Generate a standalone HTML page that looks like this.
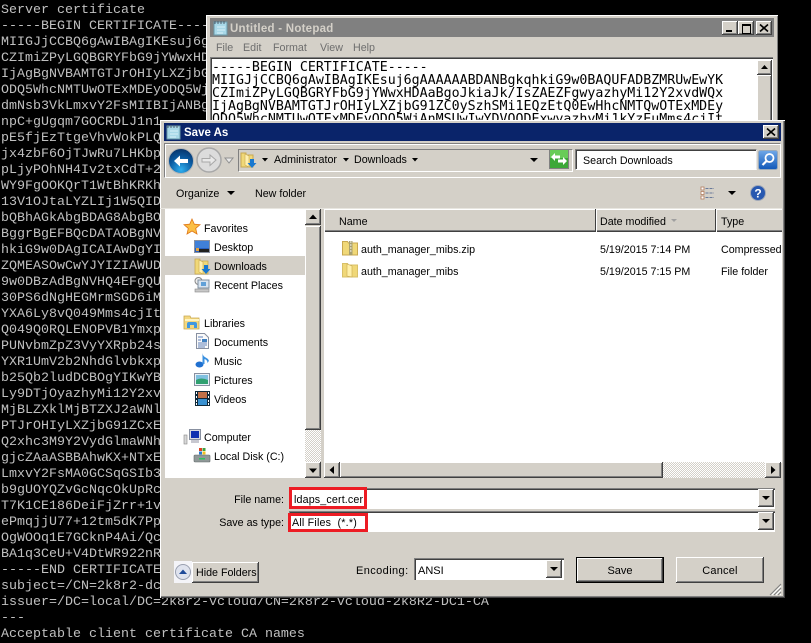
<!DOCTYPE html>
<html><head><meta charset="utf-8"><style>
html,body{margin:0;padding:0;background:#000;}
#r{position:relative;width:811px;height:643px;overflow:hidden;background:#000;font-family:"Liberation Sans",sans-serif;font-size:10.7px;color:#000;}
#con{position:absolute;left:1px;top:3px;font:13.33px/16px "Liberation Mono",monospace;color:#c0c0c0;white-space:pre;}
.a{position:absolute;}
.t{position:absolute;white-space:pre;line-height:14px;margin-top:1px;}
.u{margin-top:2px;}
.b{position:absolute;background:#d4d0c8;box-shadow:inset -1px -1px #404040,inset 1px 1px #fff,inset -2px -2px #808080,inset 2px 2px #d4d0c8;}
.s{position:absolute;background:#fff;box-shadow:inset 1px 1px #808080,inset 2px 2px #404040,inset -1px -1px #fff;}
.d{position:absolute;background:repeating-conic-gradient(#fff 0 25%,#d4d0c8 0 50%) 0 0/2px 2px;}
svg{position:absolute;overflow:visible;}
</style></head><body><div id="r">
<div id="con">Server certificate
-----BEGIN CERTIFICATE-----
MIIGJjCCBQ6gAwIBAgIKEsuj6g
CZImiZPyLGQBGRYFbG9jYWwxHDAa
IjAgBgNVBAMTGTJrOHIyLXZjbG91
ODQ5WhcNMTUwOTExMDEyODQ5Wj
dmNsb3VkLmxvY2FsMIIBIjANBg
npC+gUgqm7GOCRDLJ1n1
pE5fjEzTtgeVhvWokPLQ
jx4zbF6OjTJwRu7LHKbp
pLjyPOhNH4Iv2txCdT+2
WY9FgOOKQrT1WtBhKRKh
13V1OJtaLYZLIj1W5QID
bQBhAGkAbgBDAG8AbgBO
BggrBgEFBQcDATAOBgNV
hkiG9w0DAgICAIAwDgYI
ZQMEASOwCwYJYIZIAWUD
9w0DBzAdBgNVHQ4EFgQU
30PS6dNgHEGMrmSGD6iM
YXA6Ly8vQ049Mms4cjIt
Q049Q0RQLENOPVB1Ymxp
PUNvbmZpZ3VyYXRpb24s
YXR1UmV2b2NhdGlvbkxp
b25Qb2ludDCBOgYIKwYB
Ly9DTjOyazhyMi12Y2xv
MjBLZXklMjBTZXJ2aWNl
PTJrOHIyLXZjbG91ZCxE
Q2xhc3M9Y2VydGlmaWNh
gjcZAaASBBAhwKX+NTxE
LmxvY2FsMA0GCSqGSIb3
b9gUOYQZvGcNqcOkUpRc
T7K1CE186DeiFjZrr+1v
ePmqjjU77+12tm5dK7Pp
OgWOOq1E7GCknP4Ai/Qc
BA1q3CeU+V4DtWR922nR
-----END CERTIFICATE-----
subject=/CN=2k8r2-dc1.2k8r2-vcloud.local
issuer=/DC=local/DC=2k8r2-vcloud/CN=2k8r2-vcloud-2k8R2-DC1-CA
---
Acceptable client certificate CA names</div>

<!-- Notepad -->
<div class="a" style="left:206px;top:15px;width:572px;height:110px;background:#d4d0c8;box-shadow:inset 1px 1px #fff,inset -1px -1px #808080;"></div>
<div class="a" style="left:210px;top:18px;width:564px;height:19px;background:#808080;"></div>
<svg style="left:213px;top:20px" width="16" height="16"><rect x="1" y="2" width="13" height="13" fill="#a8d8e8" stroke="#6a98a8"/><path d="M2 1v3M5 1v3M8 1v3M11 1v3" stroke="#506070"/><path d="M4 7h8M4 10h8M4 13h6" stroke="#d8f0f8"/></svg>
<div class="t u" style="left:230px;top:20px;font-weight:bold;font-size:11.5px;color:#d4d0c8;letter-spacing:.25px">Untitled - Notepad</div>
<div class="b" style="left:722px;top:21px;width:16px;height:14px"></div>
<div class="a" style="left:726px;top:30px;width:6px;height:2px;background:#000"></div>
<div class="b" style="left:738px;top:21px;width:16px;height:14px"></div>
<div class="a" style="left:742px;top:24px;width:7px;height:7px;border:1px solid #000;border-top-width:2px;box-sizing:content-box"></div>
<div class="b" style="left:756px;top:21px;width:16px;height:14px"></div>
<svg style="left:756px;top:21px" width="16" height="14"><path d="M4 3.5l8 7M12 3.5l-8 7" stroke="#000" stroke-width="1.6"/></svg>
<div class="t" style="left:216px;top:40px;color:#6e6e6e">File</div>
<div class="t" style="left:243px;top:40px;color:#6e6e6e">Edit</div>
<div class="t" style="left:273px;top:40px;color:#6e6e6e">Format</div>
<div class="t" style="left:320px;top:40px;color:#6e6e6e">View</div>
<div class="t" style="left:353px;top:40px;color:#6e6e6e">Help</div>
<div class="s" style="left:210px;top:57px;width:563px;height:70px"></div>
<div class="a" style="left:212px;top:61px;font:13.28px/13px 'DejaVu Sans Mono',monospace;white-space:pre;color:#000;height:60px;overflow:hidden">-----BEGIN CERTIFICATE-----
MIIGJjCCBQ6gAwIBAgIKEsuj6gAAAAAABDANBgkqhkiG9w0BAQUFADBZMRUwEwYK
CZImiZPyLGQBGRYFbG9jYWwxHDAaBgoJkiaJk/IsZAEZFgwyazhyMi12Y2xvdWQx
IjAgBgNVBAMTGTJrOHIyLXZjbG91ZC0ySzhSMi1EQzEtQ0EwHhcNMTQwOTExMDEy
ODQ5WhcNMTUwOTExMDEyODQ5WjAnMSUwIwYDVQQDExwyazhyMi1kYzEuMms4cjIt</div>
<div class="b" style="left:757px;top:60px;width:15px;height:15px"></div>
<svg style="left:757px;top:60px" width="15" height="15"><path d="M7.5 5l3.5 4h-7z" fill="#000"/></svg>
<div class="b" style="left:757px;top:75px;width:15px;height:50px"></div>

<!-- Save As -->
<div class="a" style="left:160px;top:120px;width:625px;height:478px;background:#d4d0c8;box-shadow:inset 1px 1px #fff,inset -1px -1px #404040,inset -2px -2px #808080;"></div>
<div class="a" style="left:164px;top:123px;width:617px;height:18px;background:#0a246a;"></div>
<svg style="left:166px;top:124px" width="16" height="16"><rect x="1" y="2" width="13" height="13" fill="#a8d8e8" stroke="#6a98a8"/><path d="M2 1v3M5 1v3M8 1v3M11 1v3" stroke="#506070"/><path d="M4 7h8M4 10h8M4 13h6" stroke="#d8f0f8"/></svg>
<div class="t" style="left:184px;top:125px;font-weight:bold;font-size:11.5px;color:#fff;">Save As</div>
<div class="b" style="left:763px;top:125px;width:16px;height:14px"></div>
<svg style="left:763px;top:125px" width="16" height="14"><path d="M4 3.5l8 7M12 3.5l-8 7" stroke="#000" stroke-width="1.6"/></svg>

<!-- toolbar -->
<div class="a" style="left:164px;top:143px;width:615px;height:33px;border:1px solid #808080;border-right-color:#fff;border-bottom-color:#fff;box-shadow:inset 1px 1px #fff;"></div>
<svg style="left:167px;top:146px" width="60" height="30">
<defs><radialGradient id="g1" cx=".5" cy=".85" r=".8"><stop offset="0" stop-color="#30b0f0"/><stop offset=".6" stop-color="#0a5aa0"/><stop offset="1" stop-color="#083870"/></radialGradient></defs>
<circle cx="14" cy="15" r="12.5" fill="url(#g1)" stroke="#b8b8b8"/>
<path d="M7 15l6-5.500v3.500h8v4h-8v3.500z" fill="#fff"/>
<circle cx="42" cy="14" r="12" fill="#dcdcdc" stroke="#a8a8a8" stroke-width="1.5"/>
<path d="M49 14l-6-5v3.500h-8v3.500h8v3.500z" fill="#e8e8e8" stroke="#a8a8a8"/>
</svg>
<svg style="left:224px;top:157px" width="10" height="8"><path d="M1 1h8l-4 5z" fill="#e8e8e8" stroke="#909090"/></svg>
<div class="a" style="left:238px;top:149px;width:333px;height:21px;border:1px solid #808080;border-right-color:#fff;border-bottom-color:#fff;box-sizing:content-box"></div>
<svg style="left:240px;top:151px" width="18" height="18"><path d="M1 2h5v2h7v12H1z" fill="#f0d878" stroke="#c8a850"/><path d="M5 3l4 2v11l-4-2z" fill="#fff0b0" stroke="#c8a850" stroke-width=".6"/><path d="M10 8h4v4h2.500l-4.500 5-4.500-5H10z" fill="#1878d0"/></svg>
<svg style="left:0;top:0" width="811" height="643"><path d="M262 158h6l-3 3.500zM343 158h6l-3 3.500zM412 158h6l-3 3.500zM530 158h8l-4 4zM227 191h8l-4 4zM728 191h8l-4 4z" fill="#000"/></svg>
<div class="t" style="left:274px;top:152px">Administrator</div>
<div class="t" style="left:354px;top:152px">Downloads</div>
<svg style="left:549px;top:149px" width="20" height="20"><rect x=".5" y=".5" width="19" height="19" fill="#3ca838" stroke="#808080"/><rect x="1" y="1" width="18" height="8" fill="#68cc58"/><path d="M2 8l4-4v2.500h5v3H6V12zM18 12l-4 4v-2.500H9v-3h5V8z" fill="#fff"/></svg>
<div class="a" style="left:575px;top:149px;width:182px;height:21px;background:#fff;border:1px solid #808080;border-right-color:#e8e8e8;border-bottom-color:#fff;box-sizing:border-box;box-shadow:inset 1px 1px #404040"></div>
<div class="t u" style="left:583px;top:152px">Search Downloads</div>
<svg style="left:758px;top:150px" width="20" height="20"><defs><linearGradient id="g2" x1="0" x2="0" y1="0" y2="1"><stop offset="0" stop-color="#70a8e8"/><stop offset="1" stop-color="#1058b8"/></linearGradient></defs><rect x=".5" y=".5" width="19" height="19" rx="2" fill="url(#g2)" stroke="#9ab"/><circle cx="11.500" cy="8" r="4" fill="none" stroke="#fff" stroke-width="1.800"/><path d="M8.500 11l-4 4" stroke="#fff" stroke-width="2.200"/></svg>

<!-- command bar -->
<div class="t" style="left:176px;top:186px">Organize</div>
<div class="t" style="left:255px;top:186px">New folder</div>
<svg style="left:700px;top:186px" width="15" height="14"><path d="M1 1h3v3H1zM1 5.500h3v3H1zM1 10h3v3H1z" fill="#fff" stroke="#b07858" stroke-width=".8"/><path d="M5.500 2.500H14M5.500 7H14M5.500 11.500H14" stroke="#6a7a9a" stroke-dasharray="3 1"/></svg>
<svg style="left:750px;top:185px" width="16" height="16"><circle cx="8" cy="8" r="7.500" fill="#2858b0" stroke="#a0a8b8"/><text x="8" y="12.500" text-anchor="middle" font-family="Liberation Sans" font-weight="bold" font-size="12" fill="#fff">?</text></svg>
<div class="a" style="left:160px;top:208px;width:622px;height:1px;background:#e8e6e0"></div>

<!-- nav pane -->
<div class="a" style="left:165px;top:209px;width:140px;height:269px;background:#fff"></div>
<div class="a" style="left:165px;top:256px;width:140px;height:19px;background:#d4d0c8"></div>
<div class="b" style="left:305px;top:209px;width:16px;height:16px"></div>
<svg style="left:305px;top:209px" width="16" height="16"><path d="M8 5.500l4 4.500H4z" fill="#000"/></svg>
<div class="b" style="left:305px;top:226px;width:16px;height:204px"></div>
<div class="d" style="left:305px;top:430px;width:16px;height:32px"></div>
<div class="b" style="left:305px;top:462px;width:16px;height:16px"></div>
<svg style="left:305px;top:462px" width="16" height="16"><path d="M8 11l4-4.500H4z" fill="#000"/></svg>

<svg style="left:184px;top:219px" width="16" height="16"><path d="M8 0l2.300 5.200 5.700.5-4.300 3.700 1.300 5.600L8 12l-5 3 1.300-5.600L0 5.700l5.700-.5z" fill="#fbbf45" stroke="#e07818" stroke-width=".8"/></svg>
<div class="t u" style="left:204px;top:220px">Favorites</div>
<svg style="left:194px;top:240px" width="16" height="14"><rect x=".5" y=".5" width="15" height="12" fill="#2860c0" stroke="#8890a0"/><rect x="1" y="1" width="14" height="7" fill="#4080d8"/><rect x="5" y="9" width="10" height="3" fill="#202020"/><rect x="2" y="8" width="3" height="3" fill="#e0a040"/></svg>
<div class="t u" style="left:214px;top:239px">Desktop</div>
<svg style="left:195px;top:258px" width="16" height="16"><path d="M0 1h5v2h8v13H0z" fill="#f0d878" stroke="#c8a850" stroke-width=".8"/><path d="M4 2l4 2v12l-4-2z" fill="#fff0b0" stroke="#c8a850" stroke-width=".6"/><path d="M9 7h4v4h2.500L11 16l-4.500-5H9z" fill="#1878d0"/></svg>
<div class="t u" style="left:214px;top:258px">Downloads</div>
<svg style="left:194px;top:277px" width="16" height="16"><circle cx="4.500" cy="4" r="3.500" fill="#f0f0f0" stroke="#888"/><rect x="4" y="3" width="11" height="8" fill="#d8e4f0" stroke="#8090a0"/><rect x="7" y="5" width="5" height="4" fill="#60a0d8"/><rect x="1" y="12" width="14" height="3" fill="#c8c8c8" stroke="#888" stroke-width=".6"/></svg>
<div class="t u" style="left:214px;top:277px">Recent Places</div>
<svg style="left:184px;top:315px" width="16" height="15"><path d="M0 1h6l1 2h8v11H0z" fill="#f4d880" stroke="#c8a850" stroke-width=".8"/><path d="M1 4h14v2H1z" fill="#fff4c0"/><path d="M3 13V9q0-2 2-2h6q2 0 2 2v4h-3v-3H6v3z" fill="#4098e0"/></svg>
<div class="t u" style="left:204px;top:315px">Libraries</div>
<svg style="left:196px;top:333px" width="13" height="16"><path d="M.5.5h8l4 4v11H.5z" fill="#fafafa" stroke="#8890a0"/><path d="M2 4h5M2 7h3M2 10h9M2 12h9M2 14h7" stroke="#6080b8"/><rect x="6" y="6" width="5" height="3" fill="#4080c0"/></svg>
<div class="t u" style="left:214px;top:334px">Documents</div>
<svg style="left:195px;top:352px" width="15" height="16"><ellipse cx="4.500" cy="12.500" rx="4" ry="3" fill="#2070d0"/><path d="M7.500 12V1q0 3 4 5t1 5q0-3-3-4v5z" fill="#3a90e0"/></svg>
<div class="t u" style="left:214px;top:353px">Music</div>
<svg style="left:194px;top:373px" width="16" height="13"><rect x=".5" y=".5" width="15" height="12" fill="#e8f0f8" stroke="#8890a0"/><rect x="2" y="2" width="12" height="5" fill="#80c0e0"/><path d="M2 7q5-3 12 0v4H2z" fill="#30a070"/></svg>
<div class="t u" style="left:214px;top:372px">Pictures</div>
<svg style="left:195px;top:391px" width="15" height="15"><rect width="15" height="15" fill="#102838"/><rect x="3" y="1" width="9" height="6" fill="#c07048"/><rect x="3" y="8" width="9" height="6" fill="#3890d0"/><path d="M1 1h1v2H1zM1 5h1v2H1zM1 9h1v2H1zM1 12h1v2H1zM13 1h1v2h-1zM13 5h1v2h-1zM13 9h1v2h-1zM13 12h1v2h-1z" fill="#fff"/></svg>
<div class="t u" style="left:214px;top:391px">Videos</div>
<svg style="left:184px;top:429px" width="17" height="16"><rect x="0" y="6" width="3" height="9" fill="#d8d8d8" stroke="#888" stroke-width=".6"/><rect x="5.500" y=".5" width="11" height="10" fill="#d8d8e0" stroke="#8890a0"/><rect x="7" y="2" width="8" height="7" fill="#1030b0"/><rect x="7" y="11" width="8" height="3" fill="#c8c8d0"/></svg>
<div class="t u" style="left:204px;top:429px">Computer</div>
<svg style="left:194px;top:447px" width="16" height="16"><path d="M5 1h3v3H5z" fill="#e04020"/><path d="M8.500 1h3v3h-3z" fill="#40a040"/><path d="M5 4.500h3v3H5z" fill="#2878d0"/><path d="M8.500 4.500h3v3h-3z" fill="#f0c020"/><rect x="0" y="8" width="16" height="7" rx="1" fill="#909898" stroke="#606868" stroke-width=".6"/><rect x="5" y="11" width="6" height="1.500" fill="#30c060"/></svg>
<div class="t u" style="left:214px;top:448px">Local Disk (C:)</div>

<!-- file pane -->
<div class="a" style="left:324px;top:209px;width:458px;height:254px;background:#fff"></div>
<div class="a" style="left:324px;top:209px;width:458px;height:23px;background:#d4d0c8;box-shadow:inset 1px 1px #fff,inset 0 -1px #404040,inset 0 -2px #808080"></div>
<div class="a" style="left:595px;top:209px;width:1px;height:23px;background:#404040"></div>
<div class="a" style="left:596px;top:209px;width:1px;height:23px;background:#fff"></div>
<div class="a" style="left:715px;top:209px;width:1px;height:23px;background:#404040"></div>
<div class="a" style="left:716px;top:209px;width:1px;height:23px;background:#fff"></div>
<div class="t u" style="left:339px;top:213px">Name</div>
<div class="t u" style="left:600px;top:213px">Date modified</div>
<svg style="left:671px;top:219px" width="6" height="4"><path d="M0 0h6L3 3z" fill="#a0a0a0"/></svg>
<div class="t u" style="left:721px;top:213px">Type</div>
<svg style="left:342px;top:240px" width="16" height="16"><path d="M.5 1.500h5l1 1.500h9v12H.5z" fill="#f0d878" stroke="#c8a850"/><rect x="7" y="1" width="3.500" height="14" fill="#a8a070"/><path d="M8 2h1.500M8 5h1.500M8 8h1.500M8 11h1.500" stroke="#fff"/></svg>
<div class="t u" style="left:361px;top:241px">auth_manager_mibs.zip</div>
<svg style="left:342px;top:262px" width="16" height="16"><path d="M.5 1.500h5l1 1.500h9v12H.5z" fill="#f0d878" stroke="#d8c068"/><path d="M5 2l5 2v11l-5-1z" fill="#fff0a8" stroke="#c8a850" stroke-width=".6"/></svg>
<div class="t u" style="left:361px;top:263px">auth_manager_mibs</div>
<div class="t u" style="left:600px;top:241px">5/19/2015 7:14 PM</div>
<div class="t u" style="left:721px;top:241px">Compressed</div>
<div class="t u" style="left:600px;top:263px">5/19/2015 7:15 PM</div>
<div class="t u" style="left:721px;top:263px">File folder</div>

<div class="b" style="left:324px;top:462px;width:16px;height:16px"></div>
<svg style="left:324px;top:462px" width="16" height="16"><path d="M5.500 8l4.500-4v8z" fill="#000"/></svg>
<div class="b" style="left:340px;top:462px;width:323px;height:16px"></div>
<div class="d" style="left:663px;top:462px;width:102px;height:16px"></div>
<div class="b" style="left:765px;top:462px;width:16px;height:16px"></div>
<svg style="left:765px;top:462px" width="16" height="16"><path d="M10.500 8L6 4v8z" fill="#000"/></svg>

<!-- fields -->
<div class="t u" style="right:527px;top:491px">File name:</div>
<div class="t u" style="right:527px;top:514px">Save as type:</div>
<div class="s" style="left:289px;top:488px;width:486px;height:21px"></div>
<div class="s" style="left:289px;top:511px;width:486px;height:21px"></div>
<div class="a" style="left:289px;top:487px;width:78px;height:22px;border:3px solid #ed1c24;box-sizing:border-box"></div>
<div class="a" style="left:288px;top:513px;width:80px;height:19px;border:3px solid #ed1c24;box-sizing:border-box"></div>
<div class="t u" style="left:294px;top:491px;letter-spacing:.15px">ldaps_cert.cer</div>
<div class="t u" style="left:292px;top:514px;letter-spacing:.2px">All Files  (*.*)</div>
<div class="b" style="left:758px;top:489px;width:16px;height:18px"></div>
<svg style="left:758px;top:489px" width="16" height="18"><path d="M4 7h8l-4 4z" fill="#000"/></svg>
<div class="b" style="left:758px;top:512px;width:16px;height:18px"></div>
<svg style="left:758px;top:512px" width="16" height="18"><path d="M4 7h8l-4 4z" fill="#000"/></svg>

<!-- bottom -->
<svg style="left:174px;top:561px" width="18" height="22"><rect width="18" height="22" fill="#f4f4f8"/><circle cx="9" cy="11" r="7.500" fill="#dfe3ee" stroke="#9aa0b0"/><path d="M5 13l4-4.500 4 4.500z" fill="#1f4a98"/></svg>
<div class="b" style="left:192px;top:562px;width:67px;height:21px"></div>
<div class="t u" style="left:196px;top:564px">Hide Folders</div>
<div class="t u" style="left:356px;top:562px;font-size:11px;letter-spacing:.4px">Encoding:</div>
<div class="s" style="left:414px;top:558px;width:150px;height:22px"></div>
<div class="t u" style="left:418px;top:562px;font-size:11px">ANSI</div>
<div class="b" style="left:546px;top:560px;width:16px;height:18px"></div>
<svg style="left:546px;top:560px" width="16" height="18"><path d="M4 7h8l-4 4z" fill="#000"/></svg>
<div class="b" style="left:577px;top:558px;width:86px;height:24px;outline:1px solid #000"></div>
<div class="t u" style="left:576px;width:88px;text-align:center;top:562px;font-size:11px">Save</div>
<div class="b" style="left:676px;top:557px;width:88px;height:26px"></div>
<div class="t u" style="left:676px;width:88px;text-align:center;top:562px;font-size:11px;letter-spacing:.2px">Cancel</div>
<svg style="left:769px;top:583px" width="13" height="13"><path d="M12 1L1 12M12 5L5 12M12 9L9 12" stroke="#808080"/><path d="M12 3L3 12M12 7L7 12M12 11L11 12" stroke="#fff"/></svg>
</div></body></html>
